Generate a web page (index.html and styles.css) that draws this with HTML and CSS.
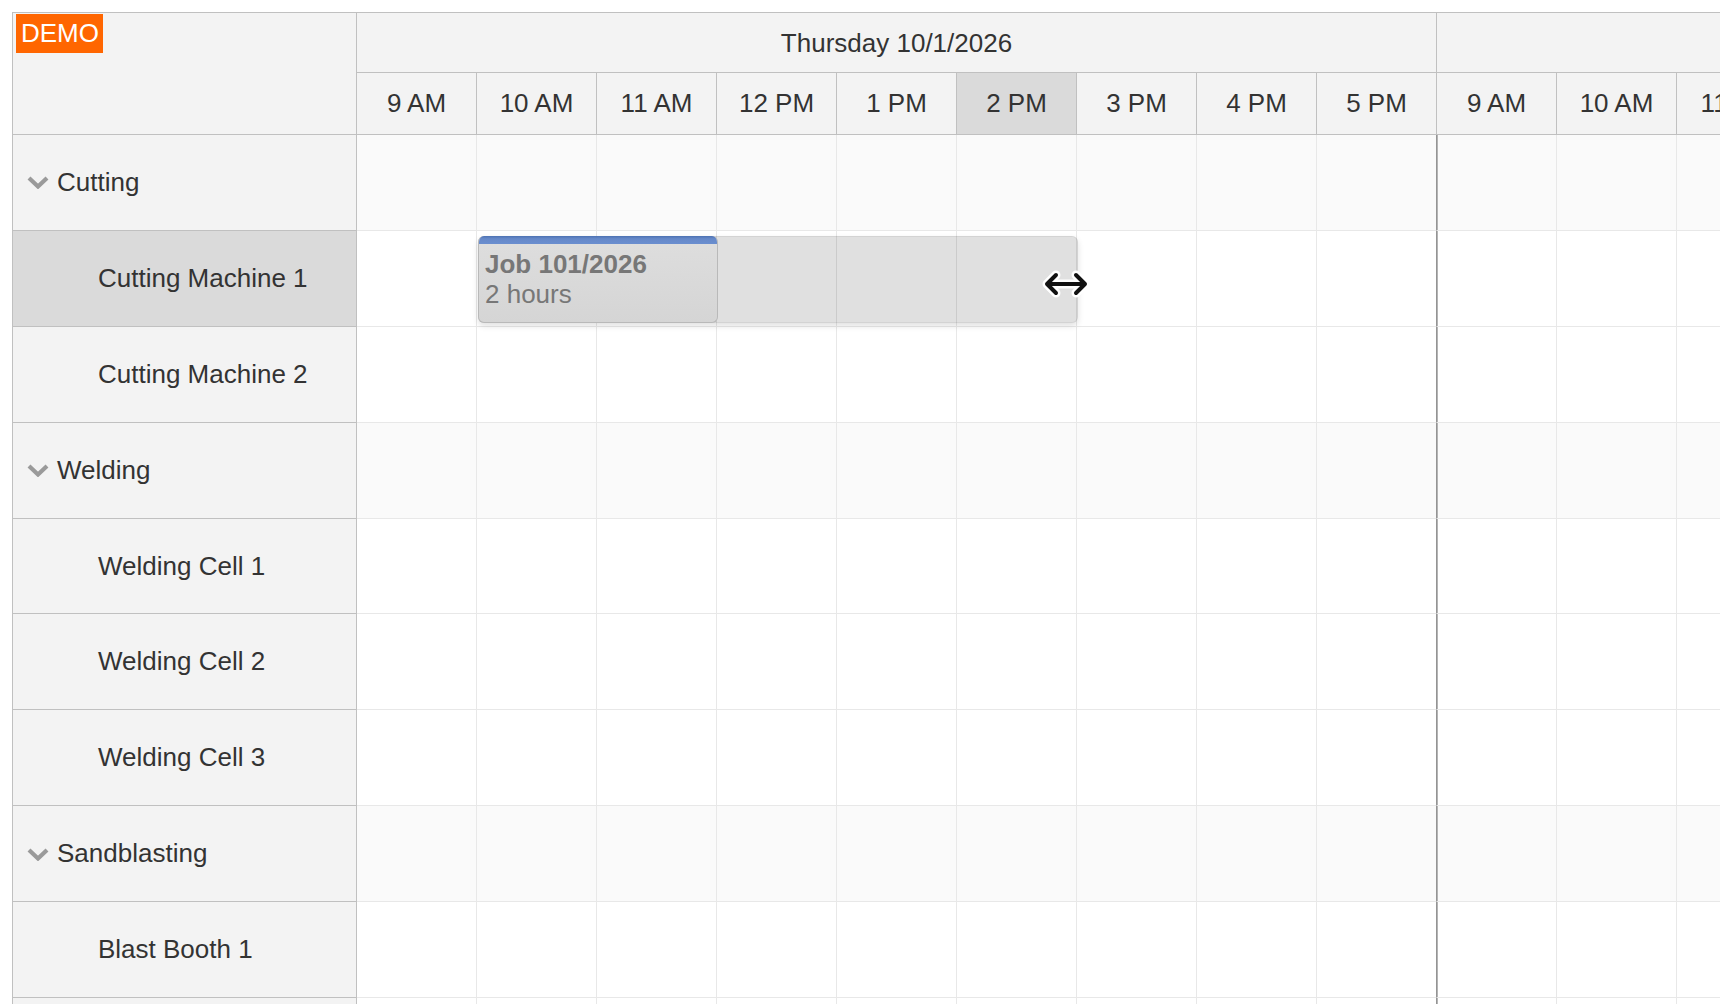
FILE: index.html
```html
<!DOCTYPE html>
<html lang="en">
<head>
<meta charset="utf-8">
<title>Scheduler</title>
<link rel="stylesheet" href="styles.css">
</head>
<body>
<div class="scheduler">
  <div class="head">
    <div class="corner"><span class="demo">DEMO</span></div>
    <div class="timeheader">
      <div class="days">
        <div class="day">Thursday 10/1/2026</div>
        <div class="day"></div>
      </div>
      <div class="hours">
        <div class="hour">9 AM</div>
        <div class="hour">10 AM</div>
        <div class="hour">11 AM</div>
        <div class="hour">12 PM</div>
        <div class="hour">1 PM</div>
        <div class="hour hour-hl">2 PM</div>
        <div class="hour">3 PM</div>
        <div class="hour">4 PM</div>
        <div class="hour">5 PM</div>
        <div class="hour">9 AM</div>
        <div class="hour">10 AM</div>
        <div class="hour">11 AM</div>
      </div>
    </div>
  </div>
  <div class="body">
    <div class="rowheaders">
      <div class="rh rh-group"><svg class="chev" width="22" height="13" viewBox="0 0 22 13"><path d="M2 2 L11 10.5 L20 2" fill="none" stroke="#9a9a9a" stroke-width="4.2"/></svg><span>Cutting</span></div>
      <div class="rh rh-child rh-hl">Cutting Machine 1</div>
      <div class="rh rh-child">Cutting Machine 2</div>
      <div class="rh rh-group"><svg class="chev" width="22" height="13" viewBox="0 0 22 13"><path d="M2 2 L11 10.5 L20 2" fill="none" stroke="#9a9a9a" stroke-width="4.2"/></svg><span>Welding</span></div>
      <div class="rh rh-child">Welding Cell 1</div>
      <div class="rh rh-child">Welding Cell 2</div>
      <div class="rh rh-child">Welding Cell 3</div>
      <div class="rh rh-group"><svg class="chev" width="22" height="13" viewBox="0 0 22 13"><path d="M2 2 L11 10.5 L20 2" fill="none" stroke="#9a9a9a" stroke-width="4.2"/></svg><span>Sandblasting</span></div>
      <div class="rh rh-child">Blast Booth 1</div>
      <div class="rh rh-child"></div>
    </div>
    <div class="grid">
      <div class="grow grow-group"><div class="gc"></div><div class="gc"></div><div class="gc"></div><div class="gc"></div><div class="gc"></div><div class="gc"></div><div class="gc"></div><div class="gc"></div><div class="gc gc-dayend"></div><div class="gc"></div><div class="gc"></div><div class="gc"></div></div>
      <div class="grow"><div class="gc"></div><div class="gc"></div><div class="gc"></div><div class="gc"></div><div class="gc"></div><div class="gc"></div><div class="gc"></div><div class="gc"></div><div class="gc gc-dayend"></div><div class="gc"></div><div class="gc"></div><div class="gc"></div></div>
      <div class="grow"><div class="gc"></div><div class="gc"></div><div class="gc"></div><div class="gc"></div><div class="gc"></div><div class="gc"></div><div class="gc"></div><div class="gc"></div><div class="gc gc-dayend"></div><div class="gc"></div><div class="gc"></div><div class="gc"></div></div>
      <div class="grow grow-group"><div class="gc"></div><div class="gc"></div><div class="gc"></div><div class="gc"></div><div class="gc"></div><div class="gc"></div><div class="gc"></div><div class="gc"></div><div class="gc gc-dayend"></div><div class="gc"></div><div class="gc"></div><div class="gc"></div></div>
      <div class="grow"><div class="gc"></div><div class="gc"></div><div class="gc"></div><div class="gc"></div><div class="gc"></div><div class="gc"></div><div class="gc"></div><div class="gc"></div><div class="gc gc-dayend"></div><div class="gc"></div><div class="gc"></div><div class="gc"></div></div>
      <div class="grow"><div class="gc"></div><div class="gc"></div><div class="gc"></div><div class="gc"></div><div class="gc"></div><div class="gc"></div><div class="gc"></div><div class="gc"></div><div class="gc gc-dayend"></div><div class="gc"></div><div class="gc"></div><div class="gc"></div></div>
      <div class="grow"><div class="gc"></div><div class="gc"></div><div class="gc"></div><div class="gc"></div><div class="gc"></div><div class="gc"></div><div class="gc"></div><div class="gc"></div><div class="gc gc-dayend"></div><div class="gc"></div><div class="gc"></div><div class="gc"></div></div>
      <div class="grow grow-group"><div class="gc"></div><div class="gc"></div><div class="gc"></div><div class="gc"></div><div class="gc"></div><div class="gc"></div><div class="gc"></div><div class="gc"></div><div class="gc gc-dayend"></div><div class="gc"></div><div class="gc"></div><div class="gc"></div></div>
      <div class="grow"><div class="gc"></div><div class="gc"></div><div class="gc"></div><div class="gc"></div><div class="gc"></div><div class="gc"></div><div class="gc"></div><div class="gc"></div><div class="gc gc-dayend"></div><div class="gc"></div><div class="gc"></div><div class="gc"></div></div>
      <div class="grow"><div class="gc"></div><div class="gc"></div><div class="gc"></div><div class="gc"></div><div class="gc"></div><div class="gc"></div><div class="gc"></div><div class="gc"></div><div class="gc gc-dayend"></div><div class="gc"></div><div class="gc"></div><div class="gc"></div></div>

      <div class="resize-shadow"></div>
      <div class="event">
        <div class="event-bar"></div>
        <div class="event-text">
          <div class="event-title">Job 101/2026</div>
          <div class="event-dur">2 hours</div>
        </div>
      </div>
      <svg class="cursor" width="48" height="30" viewBox="0 0 48 30">
        <g fill="none" stroke-linecap="round" stroke-linejoin="round">
          <path d="M6 15 H42 M14 6 L5 15 L14 24 M34 6 L43 15 L34 24" stroke="#fff" stroke-width="9"/>
          <path d="M6 15 H42 M14 6 L5 15 L14 24 M34 6 L43 15 L34 24" stroke="#111" stroke-width="4"/>
        </g>
      </svg>
    </div>
  </div>
</div>
</body>
</html>
```
FILE: styles.css
```css
* { box-sizing: border-box; }
html, body {
  margin: 0;
  padding: 0;
  overflow: hidden;
  background: #fff;
}
body {
  font-family: "Liberation Sans", Arial, sans-serif;
  font-size: 26px;
  color: #333;
}
.scheduler {
  margin: 12px 0 0 12px;
  border-top: 1px solid #c0c0c0;
  border-left: 1px solid #c0c0c0;
  width: 1800px;
}
.head {
  display: flex;
  height: 122px;
}
.corner {
  flex: none;
  width: 344px;
  height: 122px;
  background: #f3f3f3;
  border-right: 1px solid #c0c0c0;
  border-bottom: 1px solid #c0c0c0;
  padding: 1px 3px;
}
.demo {
  display: inline-block;
  background: #ff6600;
  color: #fff;
  font-size: 26px;
  line-height: 31px;
  padding: 4px 4px 4px 5px;
}
.timeheader {
  flex: none;
  display: flex;
  flex-direction: column;
}
.days {
  display: flex;
  height: 60px;
}
.day {
  flex: none;
  width: 1080px;
  height: 60px;
  background: #f3f3f3;
  border-right: 1px solid #c0c0c0;
  border-bottom: 1px solid #c0c0c0;
  display: flex;
  align-items: center;
  justify-content: center;
  padding-top: 1px;
}
.hours {
  display: flex;
  height: 62px;
}
.hour {
  flex: none;
  width: 120px;
  height: 62px;
  background: #f3f3f3;
  border-right: 1px solid #c0c0c0;
  border-bottom: 1px solid #c0c0c0;
  display: flex;
  align-items: center;
  justify-content: center;
}
.hour-hl { background: #dadada; }
.body {
  display: flex;
}
.rowheaders {
  flex: none;
  width: 344px;
}
.rh {
  height: 95.9px;
  background: #f3f3f3;
  border-right: 1px solid #c0c0c0;
  border-bottom: 1px solid #c0c0c0;
  display: flex;
  align-items: center;
}
.rh-group {
  padding-left: 14px;
  gap: 8px;
}
.chev {
  flex: none;
  margin-top: 1px;
}
.rh-child {
  padding-left: 85px;
}
.rh-hl { background: #dadada; }
.grid {
  flex: none;
  position: relative;
}
.grow {
  display: flex;
  height: 95.9px;
  background: #fff;
}
.grow-group { background: #fafafa; }
.gc {
  flex: none;
  width: 120px;
  height: 100%;
  border-right: 1px solid #e8e8e8;
  border-bottom: 1px solid #e8e8e8;
}
.gc-dayend {
  border-right: 1px solid #949494;
  box-shadow: 1px 0 0 #b4b4b4;
}
.resize-shadow {
  position: absolute;
  left: 121px;
  top: 101px;
  width: 600px;
  height: 87px;
  background: rgba(0, 0, 0, 0.12);
  border: 1px solid rgba(0, 0, 0, 0.06);
  border-radius: 6px;
  box-shadow: 0 3px 6px rgba(0, 0, 0, 0.12);
}
.event {
  position: absolute;
  left: 121px;
  top: 101px;
  width: 240px;
  height: 87px;
  background: linear-gradient(#dedede, #d5d5d5);
  border: 1px solid #b9b9b9;
  border-top: none;
  border-radius: 6px;
  overflow: hidden;
  color: #777;
}
.event-bar {
  height: 8px;
  background: linear-gradient(#4d72b3, #6689c9 35%, #6a8ecf);
  margin: 0 -1px;
}
.event-text {
  padding: 5px 0 0 6px;
  line-height: 30px;
  white-space: nowrap;
}
.event-title { font-weight: bold; }
.cursor {
  position: absolute;
  left: 685px;
  top: 134px;
}
```
